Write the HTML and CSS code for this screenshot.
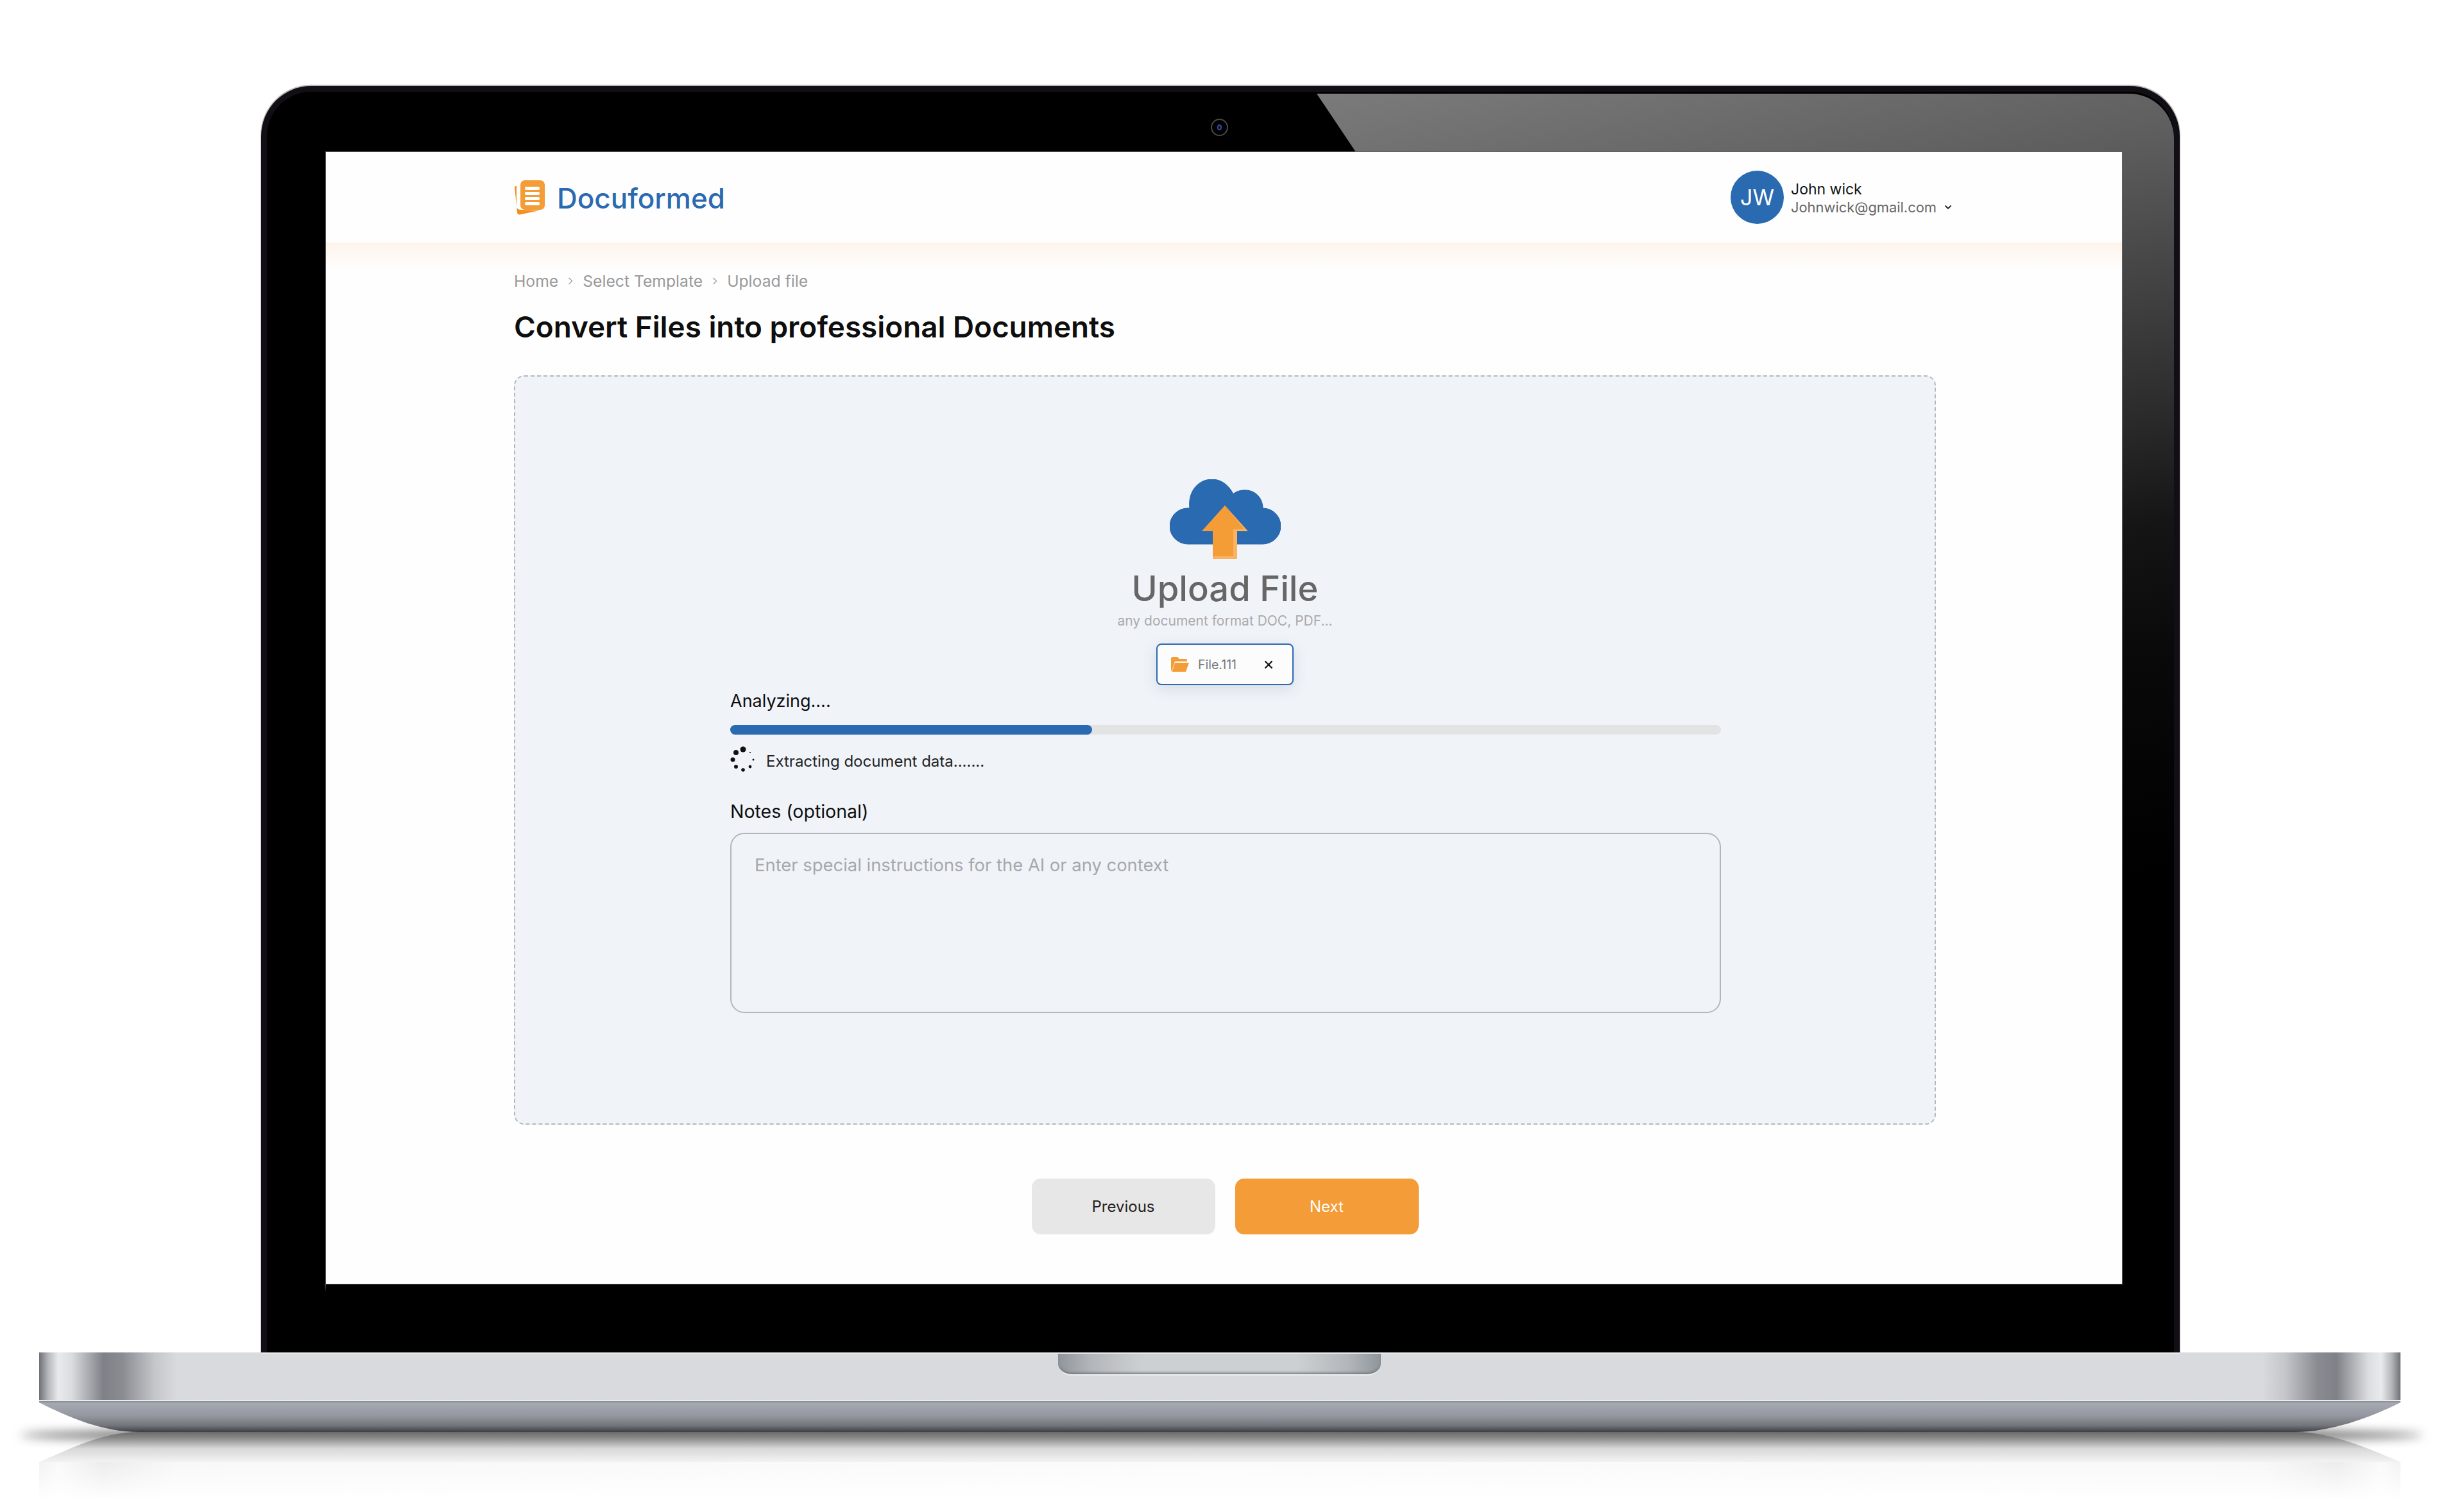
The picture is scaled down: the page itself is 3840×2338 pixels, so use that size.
FILE: index.html
```html
<!DOCTYPE html>
<html lang="en">
<head>
  <meta charset="UTF-8">
  <title>Docuformed - Upload File</title>
  <link rel="stylesheet" href="styles.css">
</head>
<body>
  <div class="laptop">
    <div class="bezel">
      <div class="bezel-glare"></div>
      <div class="camera"><span class="camera-lens"></span></div>

      <div class="screen">
        <header class="header">
          <div class="brand">
            <svg class="brand-logo" viewBox="0 0 48 54" width="48" height="54">
              <path d="M1 11 L5 50 Q5.500 54 9 53.500 L40 47 L12 46 Q4 46 4 40 L4 9 Q0 9 1 11Z" fill="#f28f20"/>
              <rect x="10" y="0" width="38" height="46" rx="7" fill="#f49c36"/>
              <rect x="17" y="10" width="23" height="5" rx="2" fill="#fff"/>
              <rect x="17" y="18" width="23" height="5" rx="2" fill="#fff"/>
              <rect x="17" y="26" width="23" height="5" rx="2" fill="#fff"/>
              <rect x="17" y="34" width="23" height="5" rx="2" fill="#fff"/>
            </svg>
            <span class="brand-name">Docuformed</span>
          </div>
          <div class="user">
            <div class="avatar">JW</div>
            <div class="user-text">
              <div class="user-name">John wick</div>
              <div class="user-mail">Johnwick@gmail.com
                <svg class="user-chevron" viewBox="0 0 12 8" width="12" height="8">
                  <path d="M1.500 1.500 L6 6 L10.500 1.500" fill="none" stroke="#222" stroke-width="1.800"/>
                </svg>
              </div>
            </div>
          </div>
        </header>

        <main class="main">
          <nav class="crumbs">
            <span>Home</span>
            <svg class="crumb-sep" viewBox="0 0 8 12" width="8" height="12"><path d="M1.500 1 L6.500 6 L1.500 11" fill="none" stroke="#999" stroke-width="1.200"/></svg>
            <span>Select Template</span>
            <svg class="crumb-sep" viewBox="0 0 8 12" width="8" height="12"><path d="M1.500 1 L6.500 6 L1.500 11" fill="none" stroke="#999" stroke-width="1.200"/></svg>
            <span>Upload file</span>
          </nav>
          <h1 class="title">Convert Files into professional Documents</h1>

          <section class="dropzone">
            <svg class="cloud" viewBox="0 0 173 124" width="173" height="124">
              <path d="M28 101 A28 28 0 0 1 28 45 H31 C28 18 45 0 66 0 C80 0 92 9 99 23 C104 18 111 17 118 17 C133 17 145 29 145 45 A28 28 0 0 1 145 101Z" fill="#2a6ab0" stroke="#2564aa" stroke-width="1"/>
              <path d="M86 41 L50 81 H67 V124 H105 V81 H122Z" fill="#fab263"/>
              <path d="M86 41 L50 81 H67 V120 H99 V78 H116Z" fill="#f49c36"/>
            </svg>
            <h2 class="upload-title">Upload File</h2>
            <p class="upload-hint">any document format DOC, PDF...</p>
            <div class="file-chip">
              <svg class="folder" viewBox="0 0 28 23" width="28" height="23">
                <path d="M0 3 Q0 0 3 0 H10 L13 3 H23 Q25 3 25 5 V7 H6 L1 22 Q0 22 0 20Z" fill="#f49c36"/>
                <path d="M6 9 H28 L23 23 H1.500Z" fill="#f49c36"/>
              </svg>
              <span class="file-name">File.111</span>
              <svg class="file-close" viewBox="0 0 14 14" width="14" height="14">
                <path d="M1.500 1.500 L12.500 12.500 M12.500 1.500 L1.500 12.500" stroke="#111" stroke-width="2.200"/>
              </svg>
            </div>

            <div class="form">
              <div class="label">Analyzing....</div>
              <div class="progress"><div class="progress-fill" style="width: 36.500%"></div></div>
              <div class="status">
                <svg class="spinner" viewBox="0 0 40 42" width="40" height="42">
                  <circle cx="20" cy="5" r="4.500"/>
                  <circle cx="9" cy="10" r="4"/>
                  <circle cx="4" cy="21" r="3.500"/>
                  <circle cx="9" cy="32" r="3"/>
                  <circle cx="20" cy="37" r="2.800"/>
                  <circle cx="31" cy="32" r="2.400"/>
                  <circle cx="36" cy="21" r="1.500"/>
                  <circle cx="31" cy="10" r="1"/>
                </svg>
                <span class="status-text">Extracting document data.......</span>
              </div>
              <label class="label notes-label" for="notes">Notes (optional)</label>
              <textarea class="notes" id="notes" placeholder="Enter special instructions for the AI or any context"></textarea>
            </div>
          </section>

          <div class="actions">
            <button class="btn btn-prev" type="button">Previous</button>
            <button class="btn btn-next" type="button">Next</button>
          </div>
        </main>
      </div>
    </div>

    <div class="base">
      <div class="base-top"><div class="notch"></div></div>
      <div class="base-line"></div>
      <div class="base-lip"></div>
    </div>

    <div class="floor">
      <div class="floor-shadow"></div>
      <div class="floor-lip"></div>
      <div class="floor-top"></div>
    </div>
  </div>
</body>
</html>
```

FILE: styles.css
```css
* {
  box-sizing: border-box;
}

html, body {
  margin: 0;
  height: 2338px;
  background: #fff;
  overflow: hidden;
}

body {
  font-family: 'Inter', 'Liberation Sans', sans-serif;
  color: #111;
}

.laptop {
  width: 3680px;
  margin-left: 61px;
  padding-top: 134px;
}

/* lid */
.bezel {
  position: relative;
  z-index: 2;
  width: 2990px;
  margin-left: 346px;
  padding: 94px 81px 107px 92px;
  background: #000;
  border: 9px solid #120e15;
  border-bottom: 0;
  border-radius: 78px 78px 0 0;
  box-shadow: 0 -1px 0 1px #b9b9b9, 0 2px 0 #ececee;
}

.bezel-glare {
  position: absolute;
  top: 3px;
  left: 0;
  right: 0;
  height: 1300px;
  border-radius: 70px 70px 0 0;
  background: linear-gradient(169deg, #7a7a7a 322px, #5e5e5e 619px, #2b2b2b 1050px, #151515 1217px, #090909 1422px, #000 1750px);
  clip-path: polygon(1636px 0, 3000px 0, 3000px 100%, 2890px 100%, 2890px 91px, 1697px 91px);
}

.camera {
  position: absolute;
  top: 42px;
  left: 1471px;
  width: 27px;
  height: 27px;
  border: 2px solid #4a4a4a;
  border-radius: 50%;
  display: flex;
  align-items: center;
  justify-content: center;
}

.camera-lens {
  width: 7px;
  height: 9px;
  border: 2px solid #3d49a8;
  border-radius: 50%;
}

.screen {
  position: relative;
  width: 2799px;
  height: 1764px;
  background: #fefefe;
  box-shadow: 0 0 0 1px #5f5f5f;
}

.screen::after {
  content: "";
  position: absolute;
  top: 100%;
  left: -2px;
  width: 2px;
  height: 14px;
  background: linear-gradient(#4a4a4a, #000);
}

/* app header */
.header {
  height: 141px;
  padding: 2px 265px 0 293px;
  display: flex;
  align-items: center;
  justify-content: space-between;
}

.brand {
  display: flex;
  align-items: center;
  gap: 19px;
}

.brand-logo {
  display: block;
  margin-top: -2px;
}

.brand-name {
  font-size: 44px;
  font-weight: 500;
  color: #2a6ab0;
}

.user {
  display: flex;
  align-items: center;
  gap: 11px;
}

.avatar {
  width: 83px;
  height: 83px;
  margin-top: -2px;
  border-radius: 50%;
  background: #2a6ab0;
  color: #fff;
  font-size: 34px;
  display: flex;
  align-items: center;
  justify-content: center;
}

.user-name {
  font-size: 23px;
  line-height: 28px;
  color: #111;
}

.user-mail {
  font-size: 21.900px;
  line-height: 28px;
  color: #666;
  display: flex;
  align-items: center;
  gap: 12px;
}

/* page */
.main {
  height: 1623px;
  padding: 45px 290px 0 293px;
  background: linear-gradient(#fdf4eb, #fefefe 42px);
}

.crumbs {
  height: 30px;
  display: flex;
  align-items: center;
  gap: 15px;
  font-size: 24.700px;
  color: #999;
}

.title {
  margin: 27px 0 45px;
  font-size: 45.800px;
  line-height: 60px;
  font-weight: 600;
  color: #0e0e0e;
}

.dropzone {
  height: 1168px;
  padding-top: 160px;
  background: #f0f4f9;
  border: 2px dashed #b4b8be;
  border-radius: 16px;
  display: flex;
  flex-direction: column;
  align-items: center;
}

.cloud {
  display: block;
  flex: none;
}

.upload-title {
  margin: 11px 0 0;
  font-size: 54.300px;
  line-height: 70px;
  font-weight: 500;
  color: #666;
}

.upload-hint {
  margin: 1px 0 0;
  font-size: 21px;
  line-height: 30px;
  color: #aaa;
}

.file-chip {
  margin-top: 20px;
  width: 214px;
  height: 65px;
  padding: 0 30px 0 21px;
  display: flex;
  align-items: center;
  background: #fcfcfc;
  border: 2px solid #2a6ab0;
  border-radius: 8px;
  box-shadow: 0 6px 22px rgba(60, 80, 110, 0.14);
}

.file-name {
  margin-left: 14px;
  font-size: 19.500px;
  color: #777;
}

.file-close {
  margin-left: auto;
}

.form {
  align-self: center;
  width: 1544px;
  margin: 10px 0 0 2px;
}

.label {
  display: block;
  font-size: 27px;
  line-height: 30px;
  color: #0e0e0e;
}

.progress {
  height: 15px;
  margin-top: 22px;
  background: #e2e3e5;
  border-radius: 8px;
}

.progress-fill {
  height: 100%;
  background: #2a6ab0;
  border-radius: 8px;
}

.status {
  margin-top: 19px;
  height: 40px;
  display: flex;
  align-items: center;
  gap: 16px;
}

.spinner {
  flex: none;
  overflow: visible;
  fill: #111;
}

.status-text {
  margin-top: 4px;
  font-size: 24px;
  color: #222;
}

.notes-label {
  margin-top: 46px;
  font-size: 28.500px;
}

.notes {
  display: block;
  width: 100%;
  height: 281px;
  margin-top: 18px;
  padding: 33px 36px;
  font-family: inherit;
  font-size: 27.400px;
  line-height: 30px;
  background: transparent;
  border: 2px solid #b4b6b9;
  border-radius: 22px;
  resize: none;
}

.notes::placeholder {
  color: #a6a8ab;
}

.actions {
  margin-top: 84px;
  display: flex;
  justify-content: center;
  gap: 31px;
}

.btn {
  width: 286px;
  height: 87px;
  border: 0;
  border-radius: 14px;
  font-family: inherit;
  font-size: 24px;
}

.btn-prev {
  background: #e7e7e7;
  color: #222;
}

.btn-next {
  background: #f39c38;
  color: #fff;
}

/* lower body */
.base {
  position: relative;
  z-index: 1;
}

.base-top {
  height: 74px;
  padding-right: 2px;
  display: flex;
  justify-content: center;
  background: linear-gradient(90deg,
    #6f7075 0, #b5b7bb 14px, #e9eaec 30px, #dcdde0 50px, #7f8188 100px, #8a8c92 130px, #c4c6ca 180px, #d9dadd 215px,
    #d9dadd calc(100% - 215px), #c4c6ca calc(100% - 180px), #8a8c92 calc(100% - 130px), #7f8188 calc(100% - 100px), #dcdde0 calc(100% - 50px), #e9eaec calc(100% - 30px), #b5b7bb calc(100% - 14px), #6f7075 100%);
}

.notch {
  width: 503px;
  height: 36px;
  border-bottom: 2px solid #eceef0;
  border-radius: 0 0 22px 22px / 0 0 18px 18px;
  background: linear-gradient(90deg, #8f959c 0, #b2b6ba 50px, #cdd0d3 130px, #cdd0d3 calc(100% - 130px), #b2b6ba calc(100% - 50px), #8f959c 100%);
  box-shadow: inset 0 -4px 4px -2px #6f7378;
}

.base-line {
  height: 4px;
  background: linear-gradient(#eaebed 50%, #8a8e96 50%);
}

.base-lip {
  height: 46px;
  background: linear-gradient(#a6aab2 0, #94979f 45%, #73757b 78%, #3e3e42 100%);
  clip-path: path("M0 0 H3680 C3630 25 3570 46 3516 46 H156 C100 46 50 25 0 0Z");
}

/* table reflection */
.floor {
  position: relative;
  height: 106px;
}

.floor-shadow {
  position: absolute;
  top: -10px;
  left: -30px;
  right: -35px;
  height: 30px;
  background: #555;
  border-radius: 50%;
  filter: blur(8px);
}

.floor-lip {
  position: relative;
  height: 47px;
  background: linear-gradient(#6a6a6a 0, #8a8a8a 20%, #d8d8d8 55%, #f3f3f3 100%);
  clip-path: path("M156 0 H3516 C3570 0 3630 25 3680 47 H0 C50 25 100 0 156 0Z");
}

.floor-top {
  position: relative;
  height: 59px;
  background:
    linear-gradient(rgba(255, 255, 255, 0), #fff),
    linear-gradient(90deg, #f2f2f2 0, #fafafa 30px, #ececec 100px, #f8f8f8 215px, #fbfbfb 50%, #f8f8f8 calc(100% - 215px), #ececec calc(100% - 100px), #fafafa calc(100% - 30px), #f2f2f2 100%);
}
```
